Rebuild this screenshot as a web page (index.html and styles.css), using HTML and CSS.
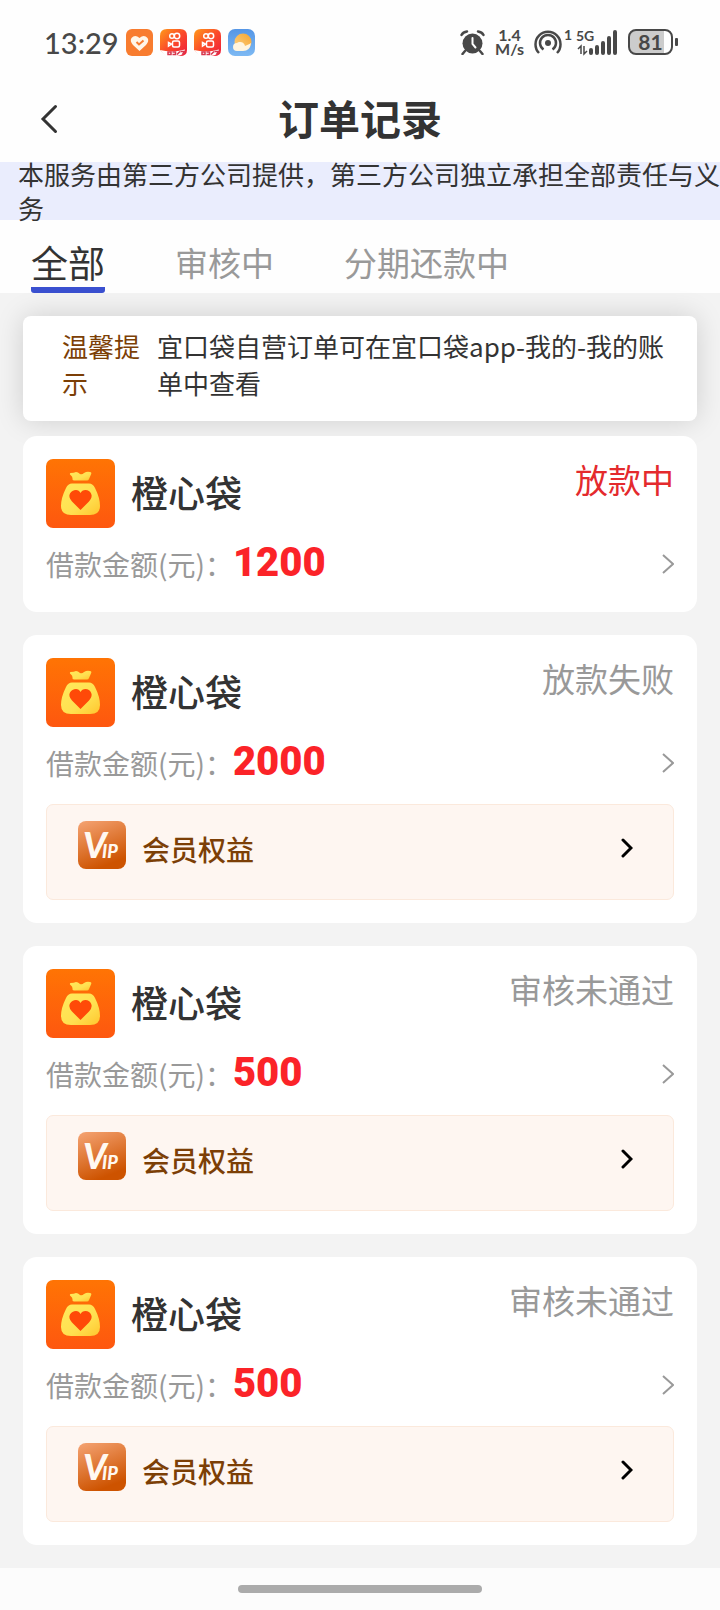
FILE: index.html
```html
<!DOCTYPE html>
<html lang="zh-CN">

<head>
  <meta charset="UTF-8">
  <meta name="viewport" content="width=device-width, initial-scale=1.0">
  <title>订单记录</title>
  <link rel="stylesheet" href="styles.css">
</head>

<body>
  <!-- shared icons -->
  <svg class="sprite" width="0" height="0" aria-hidden="true">
    <defs>
      <linearGradient id="logo-bg" x1="0" y1="0" x2="0" y2="1">
        <stop offset="0" stop-color="#ff7404" />
        <stop offset="1" stop-color="#fe570f" />
      </linearGradient>
      <linearGradient id="bag-fill" x1="0" y1="0" x2="1" y2="1">
        <stop offset="0" stop-color="#ffe95c" />
        <stop offset="0.6" stop-color="#ffe050" />
        <stop offset="1" stop-color="#ffc62e" />
      </linearGradient>
      <linearGradient id="vip-bg" x1="0" y1="0" x2="0.4" y2="1">
        <stop offset="0" stop-color="#f5a474" />
        <stop offset="1" stop-color="#cd5300" />
      </linearGradient>
      <linearGradient id="video-bg" x1="0" y1="0" x2="1" y2="1">
        <stop offset="0" stop-color="#ff9a1a" />
        <stop offset="0.5" stop-color="#fb4a2a" />
        <stop offset="1" stop-color="#ee1c3c" />
      </linearGradient>
      <linearGradient id="sky-bg" x1="0" y1="0" x2="0" y2="1">
        <stop offset="0" stop-color="#5596e6" />
        <stop offset="1" stop-color="#7db9f3" />
      </linearGradient>
      <linearGradient id="sun-fill" x1="1" y1="0" x2="0" y2="1">
        <stop offset="0" stop-color="#f8a52c" />
        <stop offset="1" stop-color="#fbd48a" />
      </linearGradient>
    </defs>
    <symbol id="icon-logo" viewBox="0 0 69 69">
      <rect width="69" height="69" rx="7" fill="url(#logo-bg)" />
      <path d="M24.500 14Q28 14 30 13Q32 13 34 15Q36 16 38 14Q41 12 44 13Q46 13 45 15.500L43 20Q42.500 21.500 41 21.500H28Q26 21.500 26.500 19.500Q26.500 17.500 25 16.500Q23 15 24.500 14z" fill="url(#bag-fill)" />
      <path d="M26 24.500H43Q47 24.500 49 29Q54 39 54 47Q54 56 44 56H25Q15 56 15 47Q15 39 20 29Q22 24.500 26 24.500z" fill="url(#bag-fill)" />
      <path d="M34.500 51L26 42.500Q22 38 24 34.500Q26 31 30 31Q33 31 34.500 34Q36 31 39.500 31Q43.500 31 45 34.500Q47 38 43 42.500z" fill="#ff4a08" />
    </symbol>
    <symbol id="icon-vip" viewBox="0 0 48 48">
      <rect width="48" height="48" rx="8" fill="url(#vip-bg)" />
      <text x="5" y="37" class="vip-big">V</text>
      <text x="24" y="37" class="vip-small">IP</text>
    </symbol>
    <symbol id="icon-video" viewBox="0 0 27 27">
      <path d="M7 0H20Q27 0 27 7V21Q27 27 20 27H7L0 21V7Q0 0 7 0z" fill="url(#video-bg)" />
      <g fill="none" stroke="#fff" stroke-width="1.500">
        <circle cx="12" cy="7" r="2.300" />
        <circle cx="17" cy="7" r="2.700" />
        <rect x="12.500" y="12" width="7" height="6" rx="1.500" />
        <path d="M8.500 13.500L11.500 15L8.500 17z" />
      </g>
      <path d="M0 21Q12 24 25 20.500L24 24Q21 27 16 27H6Q3 24 0 21z" fill="#fff" />
      <path d="M8 23h3v2.500h-3zM12.500 23h3v2.500h-3M17 25.500l3-3M20.500 22.500h4l-2 3" fill="none" stroke="#d8364c" stroke-width="1.500" />
    </symbol>
  </svg>

  <div class="status-bar">
    <div class="status-group">
      <span class="time">13:29</span>
      <svg class="app-icon" viewBox="0 0 27 27" aria-hidden="true">
        <rect width="27" height="27" rx="6" fill="#f87c2f" />
        <path d="M13.500 22L7 16Q3.500 12 5.500 9Q9 5 13.500 9Q18 5 21.500 9Q23.500 12 20 16z" fill="#fff6e8" />
        <path d="M10.500 13L13 15.500L17.500 11.500" fill="none" stroke="#f87c2f" stroke-width="2" />
      </svg>
      <svg class="app-icon" aria-hidden="true"><use href="#icon-video" /></svg>
      <svg class="app-icon" aria-hidden="true"><use href="#icon-video" /></svg>
      <svg class="app-icon" viewBox="0 0 27 27" aria-hidden="true">
        <rect width="27" height="27" rx="7" fill="url(#sky-bg)" />
        <circle cx="15" cy="13" r="8.500" fill="url(#sun-fill)" />
        <path d="M9 22a4 4 0 0 1 0-8a5 5 0 0 1 8 3q5-2 6-3q-1 8-8 8z" fill="#fff5df" />
      </svg>
    </div>
    <div class="status-group status-right">
      <svg width="25" height="25" viewBox="0 0 25 25" aria-hidden="true">
        <circle cx="12.500" cy="13.500" r="10" fill="#484848" />
        <path d="M5 21l-2.500 3M20 21l2.500 3M1.500 5Q3 2 7 1.500M23.500 5Q22 2 18 1.500" fill="none" stroke="#484848" stroke-width="2.500" stroke-linecap="round" />
        <path d="M12.500 8v6l3 3.500" fill="none" stroke="#fff" stroke-width="2" stroke-linecap="round" />
      </svg>
      <span class="speed">1.4<br>M/s</span>
      <!-- hotspot and signal strength -->
      <svg width="84" height="28" viewBox="0 0 84 28" aria-hidden="true">
        <circle cx="14" cy="15" r="3" fill="#484848" />
        <path d="M9.500 21.500a8 8 0 1 1 9 0M5 25a12.500 12.500 0 1 1 18 0" fill="none" stroke="#484848" stroke-width="2.500" />
        <text x="30" y="12" class="signal-text">1</text>
        <text x="42" y="13" class="signal-text">5G</text>
        <path d="M44 21l3-3v8M50 18v8l3-3" fill="none" stroke="#484848" stroke-width="1.500" />
        <path d="M57 22v3M63 19v6M69 15v10M75 10v15M81 4v21" stroke="#484848" stroke-width="4" stroke-linecap="round" />
      </svg>
      <svg width="51" height="26" viewBox="0 0 51 26" aria-hidden="true">
        <path d="M7 2H36V24H7Q2 24 2 19V7Q2 2 7 2z" fill="#ccc" />
        <rect x="1" y="1" width="43" height="24" rx="7" fill="none" stroke="#484848" stroke-width="2" />
        <rect x="47" y="9" width="3" height="8" rx="1" fill="#484848" />
        <text x="22.500" y="21" class="battery-text">81</text>
      </svg>
    </div>
  </div>

  <header class="header">
    <button class="back" type="button" aria-label="返回">
      <svg width="18" height="30" viewBox="0 0 18 30" aria-hidden="true">
        <path d="M15.500 2.500L3 15L15.500 27.500" fill="none" stroke="#333" stroke-width="3" stroke-linecap="round" />
      </svg>
    </button>
    <h1>订单记录</h1>
  </header>

  <div class="notice">
    <p>本服务由第三方公司提供，第三方公司独立承担全部责任与义务</p>
  </div>

  <nav class="tabs">
    <button class="tab active" type="button">全部</button>
    <button class="tab" type="button">审核中</button>
    <button class="tab" type="button">分期还款中</button>
  </nav>

  <main class="content">
    <section class="tip">
      <p class="tip-label">温馨提示</p>
      <p class="tip-text">宜口袋自营订单可在宜口袋app-我的-我的账单中查看</p>
    </section>

    <article class="card">
      <div class="card-top">
        <svg class="logo" aria-hidden="true"><use href="#icon-logo" /></svg>
        <h2>橙心袋</h2>
        <span class="state state-active">放款中</span>
      </div>
      <a class="amount-row" href="#">
        <span class="amount-label">借款金额(元)：</span>
        <strong class="amount">1200</strong>
        <svg class="arrow" viewBox="0 0 12 20" aria-hidden="true"><path d="M1 1L11 10L1 19" /></svg>
      </a>
    </article>

    <article class="card">
      <div class="card-top">
        <svg class="logo" aria-hidden="true"><use href="#icon-logo" /></svg>
        <h2>橙心袋</h2>
        <span class="state">放款失败</span>
      </div>
      <a class="amount-row" href="#">
        <span class="amount-label">借款金额(元)：</span>
        <strong class="amount">2000</strong>
        <svg class="arrow" viewBox="0 0 12 20" aria-hidden="true"><path d="M1 1L11 10L1 19" /></svg>
      </a>
      <a class="vip" href="#">
        <svg class="vip-icon" aria-hidden="true"><use href="#icon-vip" /></svg>
        <span class="vip-text">会员权益</span>
        <svg class="vip-arrow" viewBox="0 0 12 20" aria-hidden="true"><path d="M2 2L10 10L2 18" /></svg>
      </a>
    </article>

    <article class="card">
      <div class="card-top">
        <svg class="logo" aria-hidden="true"><use href="#icon-logo" /></svg>
        <h2>橙心袋</h2>
        <span class="state">审核未通过</span>
      </div>
      <a class="amount-row" href="#">
        <span class="amount-label">借款金额(元)：</span>
        <strong class="amount">500</strong>
        <svg class="arrow" viewBox="0 0 12 20" aria-hidden="true"><path d="M1 1L11 10L1 19" /></svg>
      </a>
      <a class="vip" href="#">
        <svg class="vip-icon" aria-hidden="true"><use href="#icon-vip" /></svg>
        <span class="vip-text">会员权益</span>
        <svg class="vip-arrow" viewBox="0 0 12 20" aria-hidden="true"><path d="M2 2L10 10L2 18" /></svg>
      </a>
    </article>

    <article class="card">
      <div class="card-top">
        <svg class="logo" aria-hidden="true"><use href="#icon-logo" /></svg>
        <h2>橙心袋</h2>
        <span class="state">审核未通过</span>
      </div>
      <a class="amount-row" href="#">
        <span class="amount-label">借款金额(元)：</span>
        <strong class="amount">500</strong>
        <svg class="arrow" viewBox="0 0 12 20" aria-hidden="true"><path d="M1 1L11 10L1 19" /></svg>
      </a>
      <a class="vip" href="#">
        <svg class="vip-icon" aria-hidden="true"><use href="#icon-vip" /></svg>
        <span class="vip-text">会员权益</span>
        <svg class="vip-arrow" viewBox="0 0 12 20" aria-hidden="true"><path d="M2 2L10 10L2 18" /></svg>
      </a>
    </article>
  </main>

  <footer class="home-bar">
    <div class="home-pill"></div>
  </footer>
</body>

</html>
```
FILE: styles.css
```css
* {
  box-sizing: border-box;
}

body {
  font-family: "Noto Sans CJK SC", sans-serif;
  background-color: #fefefe;
  color: #333;
  margin: 0;
}

h1, h2, p {
  margin: 0;
}

button {
  font-family: inherit;
  background: none;
  border: none;
  padding: 0;
  cursor: pointer;
}

a {
  color: inherit;
  text-decoration: none;
}

svg {
  display: block;
  flex-shrink: 0;
}

.sprite {
  position: absolute;
}

/* status bar */
.status-bar {
  display: flex;
  justify-content: space-between;
  align-items: center;
  height: 84px;
  padding: 0 41px 0 44px;
  color: #484848;
  font-family: Lato, sans-serif;
}

.status-group {
  display: flex;
  align-items: center;
  gap: 7px;
}

.status-right {
  gap: 10px;
}

.time {
  font-size: 29px;
  font-weight: 500;
}

.app-icon {
  width: 27px;
  height: 27px;
}

.speed {
  font-size: 16px;
  font-weight: 700;
  line-height: 14px;
  text-align: center;
}

.signal-text {
  font: 700 14px Lato, sans-serif;
  fill: #484848;
}

.battery-text {
  font: 700 21px Lato, sans-serif;
  fill: #484848;
  text-anchor: middle;
}

/* title */
.header {
  display: grid;
  grid-template-columns: 1fr auto 1fr;
  align-items: center;
  height: 78px;
  padding: 0 40px 8px;
}

.header h1 {
  font-size: 41px;
  line-height: 56px;
  padding-bottom: 4px;
  font-weight: 700;
}

.back {
  justify-self: start;
}

.notice {
  display: flex;
  align-items: center;
  height: 58px;
  padding-left: 18px;
  background-color: #eaedfd;
  font-size: 26px;
  line-height: 34px;
}

.tabs {
  display: flex;
  align-items: stretch;
  gap: 70px;
  height: 73px;
  padding: 0 31px;
}

.tab {
  padding-top: 16px;
  border-bottom: 6px solid transparent;
  color: #999;
  font-size: 33px;
  line-height: 50px;
}

.tab.active {
  color: #333;
  font-size: 37px;
  background: linear-gradient(#3a50d0, #3a50d0) bottom / 100% 6px no-repeat border-box;
  border-radius: 3px;
}

/* order list */
.content {
  display: flex;
  flex-direction: column;
  gap: 23px;
  padding: 23px;
  background-color: #f3f3f3;
}

.tip {
  display: flex;
  gap: 14px;
  margin-bottom: -8px;
  padding: 11px 22px 20px 39px;
  background-color: #fff;
  border-radius: 8px;
  box-shadow: 0 0 28px rgba(0, 0, 0, 0.15);
  font-size: 26px;
  line-height: 37px;
}

.tip-label {
  flex: 0 0 81px;
  color: #7c3f06;
}

.card {
  position: relative;
  padding: 23px;
  background-color: #fff;
  border-radius: 14px;
}

.card-top {
  display: flex;
  gap: 16px;
}

.logo {
  width: 69px;
  height: 69px;
}

.card h2 {
  font-size: 37px;
  line-height: 66px;
  font-weight: 500;
}

.state {
  margin-left: auto;
  color: #999;
  font-size: 33px;
  line-height: 40px;
}

.state-active {
  color: #e42a2d;
}

.amount-row {
  display: flex;
  align-items: baseline;
  height: 61px;
  padding-top: 11px;
}

.amount-label {
  color: #999;
  font-size: 28px;
}

.amount {
  color: #fb2328;
  font-family: Roboto, sans-serif;
  font-size: 40px;
  line-height: 48px;
  font-weight: 900;
}

.arrow {
  align-self: center;
  width: 12px;
  height: 20px;
  margin-left: auto;
  fill: none;
  stroke: #999;
  stroke-width: 2;
}

.vip {
  display: flex;
  align-items: flex-start;
  min-height: 96px;
  margin-top: 16px;
  padding: 16px 40px 16px 31px;
  background-color: #fef6f1;
  border: 1px solid #fbe9dc;
  border-radius: 7px;
}

.vip-icon {
  width: 48px;
  height: 48px;
}

.vip-big {
  font: italic 900 36px Lato, sans-serif;
  fill: #fff8f0;
}

.vip-small {
  font: italic 900 18px Lato, sans-serif;
  fill: #fff8f0;
}

.vip-text {
  margin-left: 16px;
  color: #7c3f06;
  font-size: 28px;
  line-height: 56px;
  font-weight: 500;
}

.vip-arrow {
  width: 12px;
  height: 54px;
  margin-left: auto;
  fill: none;
  stroke: #000;
  stroke-width: 3;
  stroke-linecap: round;
}

.home-bar {
  display: flex;
  justify-content: center;
  align-items: center;
  height: 42px;
  background-color: #fcfcfc;
}

.home-pill {
  width: 34%;
  height: 8px;
  background-color: #ababab;
  border-radius: 4px;
}
```
